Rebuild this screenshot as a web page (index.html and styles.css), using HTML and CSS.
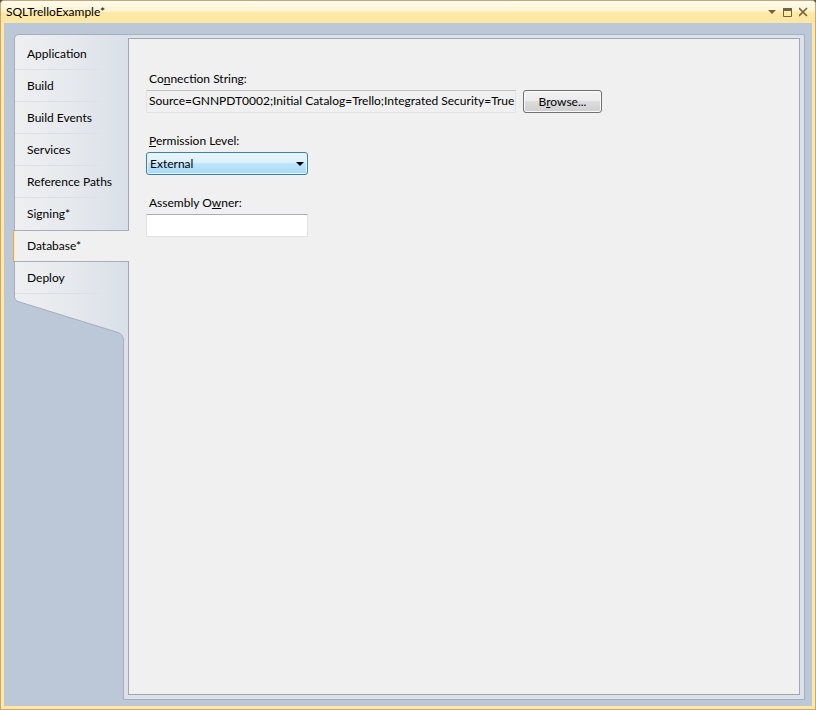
FILE: index.html
```html
<!DOCTYPE html>
<html lang="en">
<head>
<meta charset="utf-8">
<title>SQLTrelloExample*</title>
<link rel="stylesheet" href="styles.css">
</head>
<body>
<div class="window">
  <header class="titlebar">
    <h1 class="title">SQLTrelloExample*</h1>
    <div class="window-actions">
      <button type="button" class="icon-button" aria-label="Window menu"><svg width="10" height="10" viewBox="0 0 10 10"><path d="M1 3h8L5 7z" fill="#75633d"/></svg></button>
      <button type="button" class="icon-button" aria-label="Maximize"><svg width="10" height="10" viewBox="0 0 10 10"><path d="M.5 1v8.500h8V1" fill="none" stroke="#75633d"/><path d="M0 1h9v3H0z" fill="#75633d"/></svg></button>
      <button type="button" class="icon-button" aria-label="Close"><svg width="10" height="10" viewBox="0 0 10 10"><path d="M0 1l8 8M8 1L0 9" fill="none" stroke="#75633d" stroke-width="1.600"/></svg></button>
    </div>
  </header>
  <div class="workspace">
    <nav class="tabs" aria-label="Project properties">
      <div class="tab-list">
        <a class="tab" href="#">Application</a>
        <a class="tab" href="#">Build</a>
        <a class="tab" href="#">Build Events</a>
        <a class="tab" href="#">Services</a>
        <a class="tab" href="#">Reference Paths</a>
        <a class="tab before-current" href="#">Signing*</a>
        <a class="tab current" href="#" aria-current="page">Database*</a>
        <a class="tab" href="#">Deploy</a>
      </div>
      <svg class="slope" width="114" height="46" viewBox="0 0 114 46" aria-hidden="true">
        <defs><linearGradient id="tab-fill" x1="0" x2="114" y1="0" y2="0" gradientUnits="userSpaceOnUse"><stop offset="0" stop-color="#eeeff1"/><stop offset=".5" stop-color="#e6e9ed"/><stop offset="1" stop-color="#dae0e9"/></linearGradient></defs>
        <path d="M0 0V3Q.5 6 4 7.500L104 38.500Q109.500 40.500 109.500 46H114V0z" fill="url(#tab-fill)"/>
        <path d="M.5 0V3Q.5 6 4 7.500L104 38.500Q109.500 40.500 109.500 46" fill="none" stroke="#a5aebe"/>
      </svg>
    </nav>
    <main class="frame">
      <form class="page">
        <div class="field">
          <label for="connection">Co<u>n</u>nection String:</label>
          <div class="field-row">
            <input id="connection" class="text-box connection" type="text" readonly value="Source=GNNPDT0002;Initial Catalog=Trello;Integrated Security=True">
            <button type="button" class="button">B<u>r</u>owse...</button>
          </div>
        </div>
        <div class="field">
          <label for="permission"><u>P</u>ermission Level:</label>
          <div class="select-wrap">
            <select id="permission" class="select"><option>External</option></select>
            <svg class="arrow" width="8" height="4" viewBox="0 0 8 4" aria-hidden="true"><path d="M0 0h8L4 4z"/></svg>
          </div>
        </div>
        <div class="field">
          <label for="owner">Assembly O<u>w</u>ner:</label>
          <input id="owner" class="text-box owner" type="text">
        </div>
      </form>
    </main>
  </div>
</div>
</body>
</html>
```
FILE: styles.css
```css
* { box-sizing: border-box; }

body {
  margin: 0;
  background: #5b4c40;
  color: #000;
  font: 12px/16px Lato, "Open Sans", sans-serif;
}

button, input, select { font: inherit; color: inherit; }

u { text-underline-offset: 1px; text-decoration-thickness: 1px; }

.window {
  display: flex;
  flex-direction: column;
  min-height: 100vh;
  padding: 0 3px 3px;
  border: 1px solid #c8a679;
  border-radius: 4px 4px 0 0;
  background: #ffe8a6;
}

.titlebar {
  display: flex;
  align-items: center;
  justify-content: space-between;
  height: 22px;
  margin: 0 -3px;
  padding: 0 3px 0 5px;
  border-radius: 3px 3px 0 0;
  background: linear-gradient(#fffcf2, #fff3cd 46%, #ffe8a6 54%, #ffe8a6);
}

.title { margin: 0; font-size: 12px; font-weight: 400; }

.window-actions { display: flex; }

.icon-button {
  display: grid;
  place-items: center;
  width: 16px;
  height: 16px;
  padding: 0;
  border: 0;
  background: none;
}

.workspace {
  display: flex;
  flex: 1;
  padding: 11px 7px 6px 10px;
  background: #bcc7d8;
}

.tabs {
  position: relative;
  z-index: 1;
  flex: none;
  align-self: flex-start;
  width: 114px;
  margin-right: -5px;
}

.tab-list {
  padding-top: 3px;
  border: solid #a5aebe;
  border-width: 1px 0 0 1px;
  border-radius: 5px 0 0 0;
  background: linear-gradient(90deg, #eeeff1, #e6e9ed 50%, #dae0e9);
}

.tab {
  display: block;
  height: 32px;
  padding: 8px 0 7px 12px;
  border-bottom: 1px solid;
  border-image: linear-gradient(90deg, #dcdfe4, #dce0e6 60%, transparent 85%) 1;
  color: inherit;
  text-decoration: none;
  white-space: nowrap;
}

.before-current { border-bottom-color: transparent; border-image: none; }

.current {
  margin: 0 -1px 0 -2px;
  padding: 7px 0 7px 14px;
  border: solid #a5aebe;
  border-width: 1px 0;
  border-image: none;
  background: linear-gradient(90deg, #e5a94d 1px, #ffe8a6 1px, #ffe8a6 2px, #f0f0f0 2px);
}

.slope { display: block; }

.frame {
  display: flex;
  flex: 1;
  padding: 3px 4px 4px;
  border: 1px solid #a5aebe;
  border-radius: 0 2px 0 0;
  background: #dce1ea;
}

.page {
  display: flex;
  flex: 1;
  flex-direction: column;
  gap: 20px;
  padding: 32px 17px;
  border: 1px solid #a0a6b2;
  background: #f0f0f0;
}

.field { display: flex; flex-direction: column; gap: 3px; }

.field label { align-self: flex-start; padding-left: 3px; }

.field-row { display: flex; align-items: center; gap: 7px; }

.text-box {
  height: 23px;
  padding: 0 0 2px 2px;
  border: 1px solid #e3e3e5;
  border-top-color: #abadb3;
  border-radius: 1px;
  background: #fff;
}

.connection { width: 370px; border-top-color: #c0c1c5; background: #f0f0f0; }

.owner { width: 162px; }

.button {
  width: 79px;
  height: 23px;
  padding: 0;
  border: 1px solid #707070;
  border-radius: 3px;
  background: linear-gradient(#f2f2f2, #ebebeb 49%, #dddddd 50%, #cfcfcf);
  box-shadow: inset 0 0 0 1px #fafafa;
}

.select-wrap { position: relative; width: 162px; }

.select {
  display: block;
  width: 100%;
  height: 23px;
  padding: 0 20px 0 3px;
  border: 1px solid #3c7fb1;
  border-radius: 3px;
  appearance: none;
  background: linear-gradient(#eaf6fd, #d9f0fc 49%, #bee6fd 50%, #a7d9f5);
  box-shadow: inset 0 0 0 1px #e5f5fd;
}

.arrow {
  position: absolute;
  top: 10px;
  right: 4px;
  pointer-events: none;
}
```
